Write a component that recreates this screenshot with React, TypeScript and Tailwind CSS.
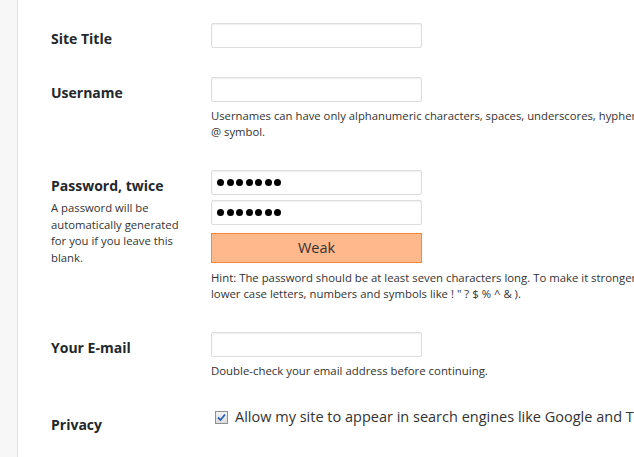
import React from 'react';

const font = { fontFamily: '"Open Sans", "Noto Sans", sans-serif' };

const TextField: React.FC<{ dots?: boolean }> = ({ dots }) => (
  <div className="w-[211px] h-[25px] border border-[#dddddd] rounded-[2px] bg-white shadow-[inset_0_1px_2px_rgba(0,0,0,0.07)] flex items-center px-[5px]">
    {dots && (
      <div className="flex gap-[2.5px]">
        {Array.from({ length: 7 }).map((_, i) => (
          <span key={i} className="w-[7px] h-[7px] rounded-full bg-black" />
        ))}
      </div>
    )}
  </div>
);

const Checkbox: React.FC = () => (
  <span className="w-[13px] h-[13px] border border-[#8f8f8f] bg-gradient-to-b from-[#f2f2f2] to-[#dcdcdc] flex items-center justify-center shrink-0">
    <svg width="9" height="9" viewBox="0 0 9 9">
      <path d="M1 4.5 L3.5 7 L8 1.5" fill="none" stroke="#2a5fb8" strokeWidth="1.8" />
    </svg>
  </span>
);

export default function App() {
  return (
    <div className="flex w-[634px] h-[457px] overflow-hidden bg-white text-[#444]" style={font}>
      <div className="w-[18px] shrink-0 bg-[#f7f7f7] border-r border-[#e2e2e2]" />

      <div className="flex flex-col pl-[33px] whitespace-nowrap">
        {/* Site Title */}
        <div className="flex">
          <div className="w-[160px] shrink-0 pt-[29px] text-[14px] leading-[20px] font-bold text-[#23282d]">Site Title</div>
          <div className="pt-[23px]">
            <TextField />
          </div>
        </div>

        {/* Username */}
        <div className="flex mt-[28px]">
          <div className="w-[160px] shrink-0 pt-[6px] text-[14px] leading-[20px] font-bold text-[#23282d]">Username</div>
          <div>
            <TextField />
            <p className="mt-[6px] text-[11.3px] leading-[16px] text-[#333]">
              Usernames can have only alphanumeric characters, spaces, underscores, hyphens, periods, and the
              <br />@ symbol.
            </p>
          </div>
        </div>

        {/* Password */}
        <div className="flex mt-[30px]">
          <div className="w-[160px] shrink-0 pt-[6px]">
            <div className="text-[14px] leading-[20px] font-bold text-[#23282d]">Password, twice</div>
            <p className="mt-[4px] text-[11.3px] leading-[16.5px] text-[#333] whitespace-normal w-[134px]">
              A password will be automatically generated for you if you leave this blank.
            </p>
          </div>
          <div>
            <TextField dots />
            <div className="mt-[5px]">
              <TextField dots />
            </div>
            <div className="mt-[8px] w-[211px] h-[30px] bg-[#ffb78c] border border-[#ff853c] flex items-center justify-center text-[14.5px] text-[#333]">
              Weak
            </div>
            <p className="mt-[7px] text-[11.35px] leading-[16px] text-[#333]">
              Hint: The password should be at least seven characters long. To make it stronger, use upper and
              <br />lower case letters, numbers and symbols like ! " ? $ % ^ &amp; ).
            </p>
          </div>
        </div>

        {/* E-mail */}
        <div className="flex mt-[30px]">
          <div className="w-[160px] shrink-0 pt-[6px] text-[14px] leading-[20px] font-bold text-[#23282d]">Your E-mail</div>
          <div>
            <TextField />
            <p className="mt-[6px] text-[11.4px] leading-[16px] text-[#333]">Double-check your email address before continuing.</p>
          </div>
        </div>

        {/* Privacy */}
        <div className="flex mt-[26px]">
          <div className="w-[160px] shrink-0 pt-[10px] text-[14px] leading-[20px] font-bold text-[#23282d]">Privacy</div>
          <label className="flex items-center gap-[7px] h-[24px] pl-[4px] text-[14.5px] text-[#333]">
            <Checkbox />
            Allow my site to appear in search engines like Google and Technorati.
          </label>
        </div>
      </div>
    </div>
  );
}
